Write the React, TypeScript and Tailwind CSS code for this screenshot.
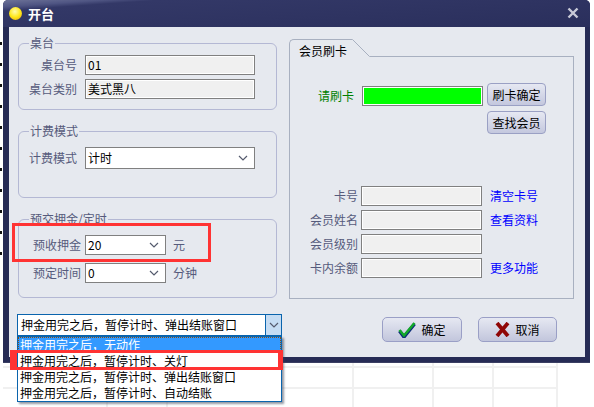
const FONT = "font-['Noto_Sans_CJK_SC','Liberation_Sans',sans-serif]";

function Chevron({ className = "" }: { className?: string }) {
  return (
    <svg width="10" height="6" viewBox="0 0 10 6" className={className}>
      <path d="M1 1 L5 5 L9 1" fill="none" stroke="#555b6e" strokeWidth="1.2" />
    </svg>
  );
}

function Field({ label, value = "", w = "w-[170px]" }: { label: string; value?: string; w?: string }) {
  return (
    <div className="flex items-center">
      <span className="w-[66px] pr-[8px] text-right text-[#565b7c] whitespace-nowrap">{label}</span>
      <div className={`${w} h-[20px] border border-[#808080] bg-[#f0f0f0] shadow-[inset_0_0_0_1px_#ffffff] pl-[2px] leading-[17px] text-black`}>
        {value}
      </div>
    </div>
  );
}

function Combo({ label, value, unit, w, labelClass, h = "h-[20px]" }: { label: string; value: string; unit?: string; w: string; labelClass: string; h?: string }) {
  return (
    <div className="flex items-center">
      <span className={`${labelClass} text-right text-[#565b7c] whitespace-nowrap`}>{label}</span>
      <div className={`${w} ${h} border border-[#808080] bg-white flex items-center justify-between pl-[2px] pr-[6px] text-black`}>
        <span>{value}</span>
        <Chevron />
      </div>
      {unit && <span className="ml-[7px] text-[#565b7c]">{unit}</span>}
    </div>
  );
}

function SmallButton({ children }: { children: string }) {
  return (
    <div className="w-[59px] h-[23px] rounded-[4px] border border-[#9aa0c4] bg-gradient-to-b from-[#e6e8f2] to-[#c4c8de] flex items-center justify-center text-black">
      {children}
    </div>
  );
}

function CardRow({ label, link }: { label: string; link?: string }) {
  return (
    <div className="flex items-center h-[20px]">
      <span className="w-[71px] pr-[3px] text-right text-[#565b7c] whitespace-nowrap">{label}</span>
      <div className="w-[121px] h-[20px] border border-[#808080] bg-[#f0f0f0] shadow-[inset_0_0_0_1px_#ffffff]" />
      {link && <span className="ml-[8px] text-[#0000ff]">{link}</span>}
    </div>
  );
}

function ActionButton({ icon, label, w }: { icon: React.ReactNode; label: string; w: string }) {
  return (
    <div className={`${w} h-[25px] rounded-[5px] border border-[#9a9fc6] bg-gradient-to-b from-[#e6e8f2] to-[#c2c6dc] flex items-center justify-center gap-[5px] text-black`}>
      {icon}
      <span>{label}</span>
    </div>
  );
}

export default function App() {
  return (
    <div className={`${FONT} relative w-[594px] h-[407px] overflow-hidden bg-white text-[12px] leading-[16px]`}>
      <div className="flex h-[363px]">
        <div className="w-[3px] h-full pt-[42px]">
          <div className="w-[2px] h-[214px] bg-[repeating-linear-gradient(to_bottom,#111111_0px,#111111_3px,#ffffff_3px,#ffffff_21px)]" />
        </div>
        <div className="w-[587px] h-full flex flex-col rounded-t-[5px] bg-[#262b55] border-b border-[#3b3f63]">
          <div className="relative h-[27px] shrink-0 flex items-center rounded-t-[5px] bg-[linear-gradient(176deg,#6d7398_0px,#4f5583_7px,#333867_11px,#2a2f5c_100%)] pl-[6px]">
            <div className="w-[13px] h-[13px] rounded-full bg-[radial-gradient(circle_at_45%_35%,#fffbb0_0%,#ffe81a_50%,#e0a010_100%)]" />
            <span className="ml-[6px] text-white font-bold text-[13px]">开台</span>
            <svg width="12" height="12" viewBox="0 0 12 12" className="absolute right-[11px] top-[7px]">
              <path d="M1.5 1.5 L10.5 10.5 M10.5 1.5 L1.5 10.5" stroke="#c8cad8" strokeWidth="2.4" />
            </svg>
          </div>
          <div className="ml-[6px] mr-[5px] h-[330px] bg-[#e6e9ef] flex flex-col">
            <div className="flex pl-[9px] pt-[8px] gap-[12px]">
              <div className="w-[259px] flex flex-col gap-[13px]">
                <fieldset className="h-[75px] border border-[#b4b8d4] rounded-[6px] px-0">
                  <legend className="ml-[10px] px-[1px] text-[#565b7c]">桌台</legend>
                  <div className="pt-[4px] flex flex-col gap-[4px]">
                    <Field label="桌台号" value="01" />
                    <Field label="桌台类别" value="美式黑八" />
                  </div>
                </fieldset>
                <fieldset className="h-[75px] border border-[#b4b8d4] rounded-[6px]">
                  <legend className="ml-[10px] px-[1px] text-[#565b7c]">计费模式</legend>
                  <div className="pt-[8px]">
                    <Combo label="计费模式" value="计时" w="w-[170px]" labelClass="w-[66px] pr-[8px]" h="h-[22px]" />
                  </div>
                </fieldset>
                <fieldset className="h-[87px] border border-[#b4b8d4] rounded-[6px]">
                  <legend className="ml-[10px] px-[1px] text-[#565b7c]">预交押金/定时</legend>
                  <div className="pt-[8px] flex flex-col gap-[8px]">
                    <Combo label="预收押金" value="20" unit="元" w="w-[81px]" labelClass="w-[66px] pr-[4px]" />
                    <Combo label="预定时间" value="0" unit="分钟" w="w-[81px]" labelClass="w-[66px] pr-[4px]" />
                  </div>
                </fieldset>
              </div>
              <div className="w-[285px] h-[264px] pt-[4px] flex flex-col">
                <div className="flex h-[18px] shrink-0">
                  <div className="w-[63px] border-t border-l border-[#a8b0c0] rounded-tl-[5px] pl-[9px] pt-[3px] text-black whitespace-nowrap">会员刷卡</div>
                  <svg width="18" height="18" viewBox="0 0 18 18" className="shrink-0">
                    <path d="M0 .5 H.5 L17.5 17.5 H18" fill="none" stroke="#a8b0c0" />
                  </svg>
                  <div className="flex-1 border-b border-[#a8b0c0]" />
                </div>
                <div className="flex-1 border-l border-r border-b border-[#a8b0c0] pt-[26px] flex flex-col">
                  <div className="flex">
                    <span className="w-[72px] pt-[5px] text-right pr-[8px] text-[#008000] whitespace-nowrap">请刷卡</span>
                    <div className="mt-[3px] w-[121px] h-[20px] border border-[#808080] bg-[#00ff00] shadow-[inset_0_0_0_1px_#ffffff]" />
                    <div className="ml-[4px] flex flex-col gap-[5px]">
                      <SmallButton>刷卡确定</SmallButton>
                      <SmallButton>查找会员</SmallButton>
                    </div>
                  </div>
                  <div className="mt-[52px] flex flex-col gap-[4px]">
                    <CardRow label="卡号" link="清空卡号" />
                    <CardRow label="会员姓名" link="查看资料" />
                    <CardRow label="会员级别" />
                    <CardRow label="卡内余额" link="更多功能" />
                  </div>
                </div>
              </div>
            </div>
            <div className="flex justify-between pl-[8px] pr-[28px] pt-[15px]">
              <div className="relative w-[265px] h-[22px] border border-[#0a64ad] bg-white flex items-center pl-[3px] text-black">
                <span className="flex-1 whitespace-nowrap">押金用完之后，暂停计时、弹出结账窗口</span>
                <div className="w-[16px] h-full border-l border-[#0a64ad] bg-[#c5dcf3] flex items-center justify-center">
                  <Chevron />
                </div>
                <div className="absolute left-[-1px] top-[21px] w-[265px] h-[66px] z-10 border border-[#0a64ad] bg-white text-black shadow-[2px_2px_2px_rgba(60,70,90,0.55)]">
                  <div className="h-[16px] bg-[#3399ff] text-white border border-dotted border-[#8a5010] leading-[13px] pl-[1px] whitespace-nowrap">押金用完之后，无动作</div>
                  <div className="h-[16px] pl-[2px] whitespace-nowrap">押金用完之后，暂停计时、关灯</div>
                  <div className="h-[16px] pl-[2px] whitespace-nowrap">押金用完之后，暂停计时、弹出结账窗口</div>
                  <div className="h-[16px] pl-[2px] whitespace-nowrap">押金用完之后，暂停计时、自动结账</div>
                </div>
              </div>
              <div className="flex gap-[16px] pt-[3px]">
                <ActionButton
                  w="w-[80px]"
                  label="确定"
                  icon={
                    <svg width="18" height="16" viewBox="0 0 18 16">
                      <path d="M1.5 9 L6 15 L16.5 2" fill="none" stroke="#0b2a7a" strokeWidth="3.4" />
                      <path d="M1.5 8 L6 13.5 L16.5 1" fill="none" stroke="#12a82a" strokeWidth="2.6" />
                    </svg>
                  }
                />
                <ActionButton
                  w="w-[79px]"
                  label="取消"
                  icon={
                    <svg width="15" height="15" viewBox="0 0 15 15">
                      <path d="M2 1 L13 14 M13 1 L2 14" stroke="#8f0606" strokeWidth="3.8" />
                    </svg>
                  }
                />
              </div>
            </div>
          </div>
        </div>
      </div>
      <div className="flex h-[44px] ml-[3px]">
        {["w-[105px]", "w-[60px]", "w-[186px]", "w-[80px]", "w-[60px]", "w-[64px]"].map((w, i) => (
          <div key={i} className={`${w} border-r-2 border-[#f0f0f0] flex flex-col`}>
            <div className="h-[5px] border-b-2 border-[#f0f0f0]" />
            <div className="h-[21px] border-b-2 border-[#f0f0f0]" />
          </div>
        ))}
      </div>
      <div className="absolute left-[12px] top-[223px] w-[199px] h-[39px] border-[3px] border-[#ff3333] z-20" />
      <div className="absolute left-[10px] top-[350px] w-[273px] h-[20px] border-y-[3px] border-l-[7px] border-r-[5px] border-[#ff3333] z-20" />
    </div>
  );
}
